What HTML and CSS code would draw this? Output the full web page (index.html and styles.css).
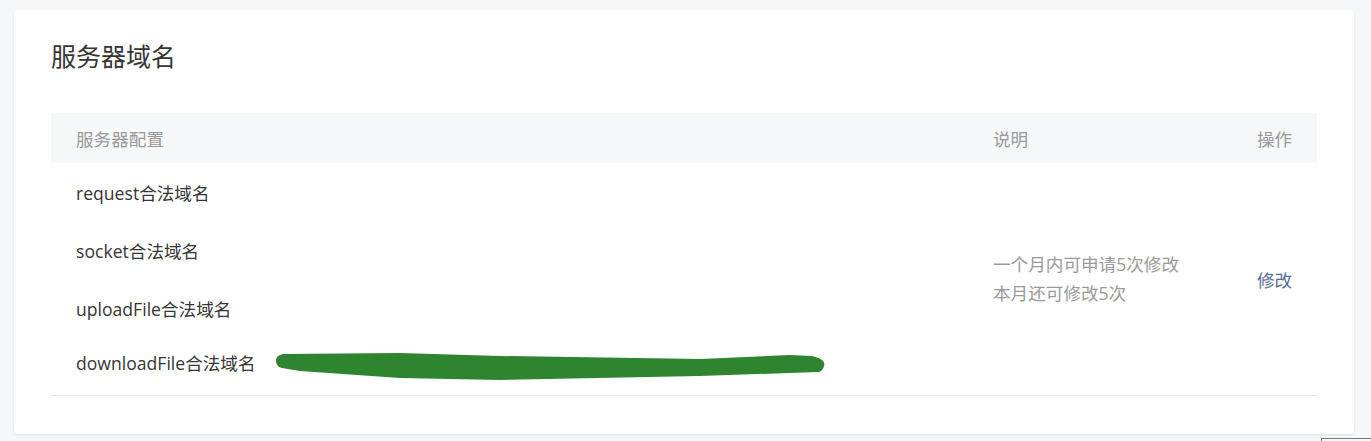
FILE: index.html
```html
<!DOCTYPE html>
<html lang="zh-CN">
<head>
  <meta charset="UTF-8">
  <meta name="viewport" content="width=device-width, initial-scale=1.0">
  <title>服务器域名</title>
  <link rel="stylesheet" href="styles.css">
</head>
<body>
  <div class="page">
    <div class="card">
      <h2 class="card-title">服务器域名</h2>

      <table class="domain-table">
        <colgroup>
          <col>
          <col class="col-desc">
          <col class="col-op">
        </colgroup>
        <thead>
          <tr>
            <th>服务器配置</th>
            <th>说明</th>
            <th class="op">操作</th>
          </tr>
        </thead>
        <tbody>
          <tr>
            <td>request合法域名</td>
            <td class="desc" rowspan="4">
              <p>一个月内可申请5次修改</p>
              <p>本月还可修改5次</p>
            </td>
            <td class="op" rowspan="4"><a href="#" class="link">修改</a></td>
          </tr>
          <tr>
            <td>socket合法域名</td>
          </tr>
          <tr>
            <td>uploadFile合法域名</td>
          </tr>
          <tr>
            <td>
              downloadFile合法域名
              <!-- redacted address -->
              <svg class="redact" width="554" height="36" viewBox="0 0 554 36">
                <path d="M2,13 C2,8 6,6 11,6 L126,5 L226,8 L426,11 L516,7 L538,8 C546,10 552,13 550,18 C549,22 546,24 544,24 L426,28 L226,32 L126,30 L26,23 L8,20 C4,19 2,16 2,13 Z" fill="#2f852f"/>
              </svg>
            </td>
          </tr>
        </tbody>
      </table>
    </div>
  </div>
  <div class="corner-box"></div>
</body>
</html>
```

FILE: styles.css
```css
body {
  margin: 0;
  background-color: #f6f7f9;
  font-family: "Open Sans", "Noto Sans CJK SC", sans-serif;
  color: #353535;
}
.page {
  padding: 10px 17px 8px 14px;
}
.card {
  background-color: #fff;
  border-radius: 4px;
  box-shadow: 0 1px 3px rgba(0,0,0,0.1);
  padding: 28px 37px 38px 37px;
}
.card-title {
  margin: 0 0 39px 0;
  font-size: 25px;
  line-height: 36px;
  font-weight: normal;
  color: #353535;
}
.domain-table {
  width: 100%;
  border-collapse: collapse;
  table-layout: fixed;
  font-size: 17.6px;
  border-bottom: 1px solid #e7e7eb;
}
.col-desc {
  width: 264px;
}
.col-op {
  width: 85px;
}
.domain-table th {
  background-color: #f6f7f9;
  color: #9a9a9a;
  font-weight: normal;
  text-align: left;
  height: 50px;
  padding: 0 25px;
  white-space: nowrap;
}
.domain-table td {
  height: 58px;
  padding: 0 25px;
  vertical-align: middle;
  white-space: nowrap;
}
.domain-table .op {
  text-align: right;
}
.desc {
  color: #9a9a9a;
}
.desc p {
  margin: 0;
  line-height: 29px;
}
.link {
  color: #576b95;
  text-decoration: none;
}
.redact {
  vertical-align: -14px;
  margin-left: 14px;
}
.corner-box {
  position: fixed;
  left: 1321px;
  top: 438px;
  width: 60px;
  height: 10px;
  border-top: 1px solid #777;
  border-left: 1px solid #777;
}
```
